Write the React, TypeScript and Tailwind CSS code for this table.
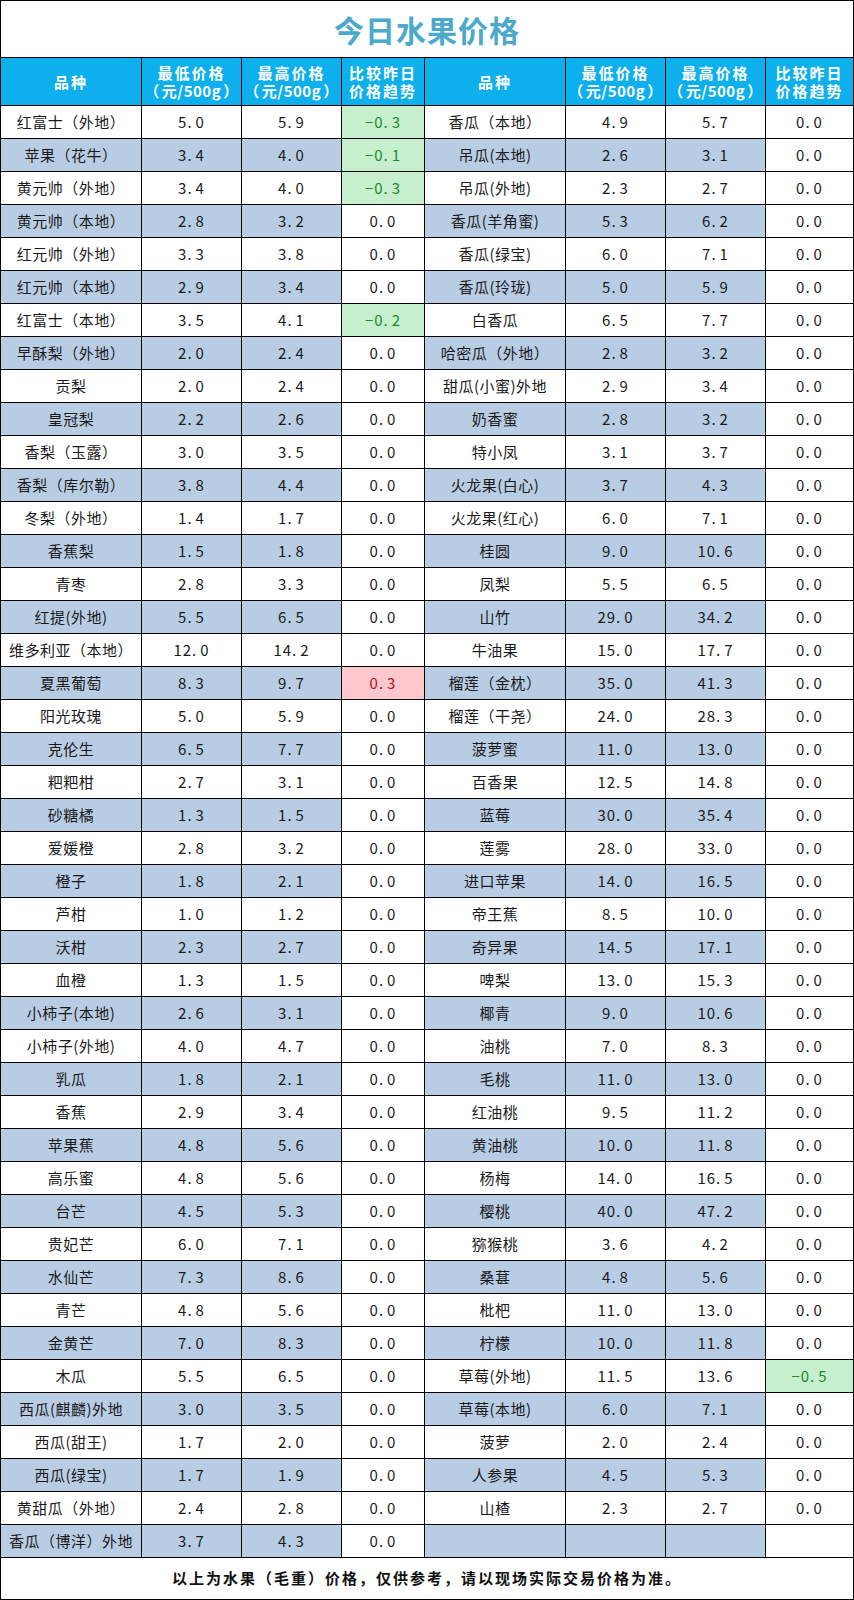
import React from "react";

type Row = [string, string, string, string, ("g" | "r" | "")?];

const left: Row[] = [
  ["红富士（外地）", "5.0", "5.9", "-0.3", "g"],
  ["苹果（花牛）", "3.4", "4.0", "-0.1", "g"],
  ["黄元帅（外地）", "3.4", "4.0", "-0.3", "g"],
  ["黄元帅（本地）", "2.8", "3.2", "0.0"],
  ["红元帅（外地）", "3.3", "3.8", "0.0"],
  ["红元帅（本地）", "2.9", "3.4", "0.0"],
  ["红富士（本地）", "3.5", "4.1", "-0.2", "g"],
  ["早酥梨（外地）", "2.0", "2.4", "0.0"],
  ["贡梨", "2.0", "2.4", "0.0"],
  ["皇冠梨", "2.2", "2.6", "0.0"],
  ["香梨（玉露）", "3.0", "3.5", "0.0"],
  ["香梨（库尔勒）", "3.8", "4.4", "0.0"],
  ["冬梨（外地）", "1.4", "1.7", "0.0"],
  ["香蕉梨", "1.5", "1.8", "0.0"],
  ["青枣", "2.8", "3.3", "0.0"],
  ["红提(外地)", "5.5", "6.5", "0.0"],
  ["维多利亚（本地）", "12.0", "14.2", "0.0"],
  ["夏黑葡萄", "8.3", "9.7", "0.3", "r"],
  ["阳光玫瑰", "5.0", "5.9", "0.0"],
  ["克伦生", "6.5", "7.7", "0.0"],
  ["粑粑柑", "2.7", "3.1", "0.0"],
  ["砂糖橘", "1.3", "1.5", "0.0"],
  ["爱媛橙", "2.8", "3.2", "0.0"],
  ["橙子", "1.8", "2.1", "0.0"],
  ["芦柑", "1.0", "1.2", "0.0"],
  ["沃柑", "2.3", "2.7", "0.0"],
  ["血橙", "1.3", "1.5", "0.0"],
  ["小柿子(本地)", "2.6", "3.1", "0.0"],
  ["小柿子(外地)", "4.0", "4.7", "0.0"],
  ["乳瓜", "1.8", "2.1", "0.0"],
  ["香蕉", "2.9", "3.4", "0.0"],
  ["苹果蕉", "4.8", "5.6", "0.0"],
  ["高乐蜜", "4.8", "5.6", "0.0"],
  ["台芒", "4.5", "5.3", "0.0"],
  ["贵妃芒", "6.0", "7.1", "0.0"],
  ["水仙芒", "7.3", "8.6", "0.0"],
  ["青芒", "4.8", "5.6", "0.0"],
  ["金黄芒", "7.0", "8.3", "0.0"],
  ["木瓜", "5.5", "6.5", "0.0"],
  ["西瓜(麒麟)外地", "3.0", "3.5", "0.0"],
  ["西瓜(甜王)", "1.7", "2.0", "0.0"],
  ["西瓜(绿宝)", "1.7", "1.9", "0.0"],
  ["黄甜瓜（外地）", "2.4", "2.8", "0.0"],
  ["香瓜（博洋）外地", "3.7", "4.3", "0.0"],
];

const right: Row[] = [
  ["香瓜（本地）", "4.9", "5.7", "0.0"],
  ["吊瓜(本地)", "2.6", "3.1", "0.0"],
  ["吊瓜(外地)", "2.3", "2.7", "0.0"],
  ["香瓜(羊角蜜)", "5.3", "6.2", "0.0"],
  ["香瓜(绿宝)", "6.0", "7.1", "0.0"],
  ["香瓜(玲珑)", "5.0", "5.9", "0.0"],
  ["白香瓜", "6.5", "7.7", "0.0"],
  ["哈密瓜（外地）", "2.8", "3.2", "0.0"],
  ["甜瓜(小蜜)外地", "2.9", "3.4", "0.0"],
  ["奶香蜜", "2.8", "3.2", "0.0"],
  ["特小凤", "3.1", "3.7", "0.0"],
  ["火龙果(白心)", "3.7", "4.3", "0.0"],
  ["火龙果(红心)", "6.0", "7.1", "0.0"],
  ["桂圆", "9.0", "10.6", "0.0"],
  ["凤梨", "5.5", "6.5", "0.0"],
  ["山竹", "29.0", "34.2", "0.0"],
  ["牛油果", "15.0", "17.7", "0.0"],
  ["榴莲（金枕）", "35.0", "41.3", "0.0"],
  ["榴莲（干尧）", "24.0", "28.3", "0.0"],
  ["菠萝蜜", "11.0", "13.0", "0.0"],
  ["百香果", "12.5", "14.8", "0.0"],
  ["蓝莓", "30.0", "35.4", "0.0"],
  ["莲雾", "28.0", "33.0", "0.0"],
  ["进口苹果", "14.0", "16.5", "0.0"],
  ["帝王蕉", "8.5", "10.0", "0.0"],
  ["奇异果", "14.5", "17.1", "0.0"],
  ["啤梨", "13.0", "15.3", "0.0"],
  ["椰青", "9.0", "10.6", "0.0"],
  ["油桃", "7.0", "8.3", "0.0"],
  ["毛桃", "11.0", "13.0", "0.0"],
  ["红油桃", "9.5", "11.2", "0.0"],
  ["黄油桃", "10.0", "11.8", "0.0"],
  ["杨梅", "14.0", "16.5", "0.0"],
  ["樱桃", "40.0", "47.2", "0.0"],
  ["猕猴桃", "3.6", "4.2", "0.0"],
  ["桑葚", "4.8", "5.6", "0.0"],
  ["枇杷", "11.0", "13.0", "0.0"],
  ["柠檬", "10.0", "11.8", "0.0"],
  ["草莓(外地)", "11.5", "13.6", "-0.5", "g"],
  ["草莓(本地)", "6.0", "7.1", "0.0"],
  ["菠萝", "2.0", "2.4", "0.0"],
  ["人参果", "4.5", "5.3", "0.0"],
  ["山楂", "2.3", "2.7", "0.0"],
  ["", "", "", ""],
];

const font = { fontFamily: '"Noto Sans CJK SC", "Noto Sans", sans-serif' };

function Num({ v }: { v: string }) {
  if (!v) return null;
  const [a, b] = v.split(".");
  return (
    <span className="tracking-[1px]">
      {a.replace("-", "−")}.<span className="ml-[3px]">{b}</span>
    </span>
  );
}

function Half({ r, blue, last }: { r: Row; blue: boolean; last?: boolean }) {
  const bg = blue ? "bg-[#b8cce4]" : "bg-white";
  const trendBg =
    r[4] === "g" ? "bg-[#c6efce] text-[#1f8a2a]" : r[4] === "r" ? "bg-[#ffc7ce] text-[#b0101c]" : "bg-white text-[#1a1a1a]";
  const cell = "flex items-center justify-center border-r border-black h-full";
  return (
    <>
      <div className={`${cell} ${bg} text-[15px] text-[#1a1a1a] tracking-[0.5px] whitespace-nowrap`}>{r[0]}</div>
      <div className={`${cell} ${bg} text-[15px] text-[#1a1a1a]`}>
        <Num v={r[1]} />
      </div>
      <div className={`${cell} ${bg} text-[15px] text-[#1a1a1a]`}>
        <Num v={r[2]} />
      </div>
      <div className={`flex items-center justify-center h-full ${last ? "" : "border-r border-black"} ${trendBg} text-[15px]`}>
        <Num v={r[3]} />
      </div>
    </>
  );
}

function Unit() {
  return (
    <span className="tracking-[0.5px]">
      <span className="mr-[2px]">（</span>元/500g<span className="ml-[2px]">）</span>
    </span>
  );
}

function HeaderHalf({ last }: { last?: boolean }) {
  const cell = "flex flex-col items-center justify-center border-black h-full leading-[18px]";
  return (
    <>
      <div className={`${cell} border-r tracking-[2px]`}>品种</div>
      <div className={`${cell} border-r`}>
        <span className="tracking-[2px]">最低价格</span>
        <Unit />
      </div>
      <div className={`${cell} border-r`}>
        <span className="tracking-[2px]">最高价格</span>
        <Unit />
      </div>
      <div className={`${cell} ${last ? "" : "border-r"}`}>
        <span className="tracking-[2px]">比较昨日</span>
        <span className="tracking-[2px]">价格趋势</span>
      </div>
    </>
  );
}

const cols = "grid grid-cols-[141px_100px_100px_83px_141px_100px_100px_1fr]";

export default function App() {
  return (
    <div className="w-[854px] h-[1600px] bg-white" style={font}>
      <div className="w-[854px] border border-black flex flex-col">
        <div className="h-[57px] border-b border-black flex items-center justify-center">
          <span className="text-[30px] font-bold text-[#4ba9cb] tracking-[1px] leading-none">今日水果价格</span>
        </div>
        <div className={`${cols} h-[48px] border-b border-black bg-[#0db0ec] text-white font-bold text-[15px]`}>
          <HeaderHalf />
          <HeaderHalf last />
        </div>
        {left.map((l, i) => (
          <div key={i} className={`${cols} h-[33px] border-b border-black`}>
            <Half r={l} blue={i % 2 === 1} />
            <Half r={right[i]} blue={i % 2 === 1} last />
          </div>
        ))}
        <div className="h-[41px] flex items-center justify-center text-[15px] tracking-[2px] font-bold text-[#111]">
          以上为水果（毛重）价格，仅供参考，请以现场实际交易价格为准。
        </div>
      </div>
    </div>
  );
}
